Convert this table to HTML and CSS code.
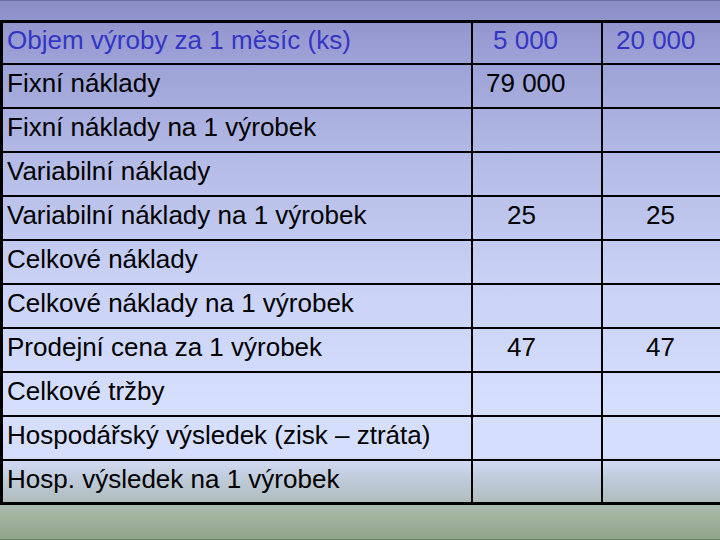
FILE: index.html
```html
<!DOCTYPE html>
<html lang="cs">
<head>
<meta charset="utf-8">
<title>Objem výroby</title>
<link rel="stylesheet" href="styles.css">
</head>
<body>
<div class="slide">
  <div class="grid">
    <div class="cell lbl head">Objem výroby za 1 měsíc (ks)</div>
    <div class="cell head p20">5 000</div>
    <div class="cell last head p13">20 000</div>

    <div class="cell lbl">Fixní náklady</div>
    <div class="cell p13">79 000</div>
    <div class="cell last"></div>

    <div class="cell lbl">Fixní náklady na 1 výrobek</div>
    <div class="cell"></div>
    <div class="cell last"></div>

    <div class="cell lbl">Variabilní náklady</div>
    <div class="cell"></div>
    <div class="cell last"></div>

    <div class="cell lbl">Variabilní náklady na 1 výrobek</div>
    <div class="cell p34">25</div>
    <div class="cell last p43">25</div>

    <div class="cell lbl">Celkové náklady</div>
    <div class="cell"></div>
    <div class="cell last"></div>

    <div class="cell lbl">Celkové náklady na 1 výrobek</div>
    <div class="cell"></div>
    <div class="cell last"></div>

    <div class="cell lbl">Prodejní cena za 1 výrobek</div>
    <div class="cell p34">47</div>
    <div class="cell last p43">47</div>

    <div class="cell lbl">Celkové tržby</div>
    <div class="cell"></div>
    <div class="cell last"></div>

    <div class="cell lbl">Hospodářský výsledek (zisk – ztráta)</div>
    <div class="cell"></div>
    <div class="cell last"></div>

    <div class="cell lbl bottom">Hosp. výsledek na 1 výrobek</div>
    <div class="cell bottom"></div>
    <div class="cell last bottom"></div>
  </div>
</div>
</body>
</html>
```

FILE: styles.css
```css
html, body {
  margin: 0;
  padding: 0;
}

body {
  width: 720px;
  height: 540px;
  overflow: hidden;
}

.slide {
  width: 720px;
  height: 540px;
  box-sizing: border-box;
  padding-top: 20px;
  background: linear-gradient(to bottom,
    #8b8ec6 0px,
    #989cd3 40px,
    #b4bbe6 160px,
    #c9d1f5 280px,
    #d5defd 400px,
    #d5defc 455px,
    #bfcad8 480px,
    #b0bec0 500px,
    #a2b5a1 515px,
    #8fa58a 540px);
  box-shadow: inset 0 1px 0 #6c709e, inset 0 -1px 0 #6e8468;
  font-family: "Liberation Sans", Arial, sans-serif;
  font-size: 26px;
  color: #000;
}

.grid {
  display: grid;
  grid-template-columns: 470px 130px 1fr;
  grid-template-rows: 42px repeat(9, 44px) 41px;
  border-top: 3px solid #000;
  border-left: 3px solid #000;
  border-bottom: 3px solid #000;
}

.cell {
  box-sizing: border-box;
  border-right: 2px solid #000;
  border-bottom: 2px solid #000;
  padding-top: 4px;
  line-height: 28px;
  white-space: nowrap;
}

.cell.last {
  border-right: none;
}

.cell.bottom {
  border-bottom: none;
}

.lbl {
  padding-left: 4px;
}

.head {
  color: #3535c4;
  padding-top: 3px;
}

.p13 { padding-left: 13px; }
.p20 { padding-left: 20px; }
.p34 { padding-left: 34px; }
.p43 { padding-left: 43px; }
```
